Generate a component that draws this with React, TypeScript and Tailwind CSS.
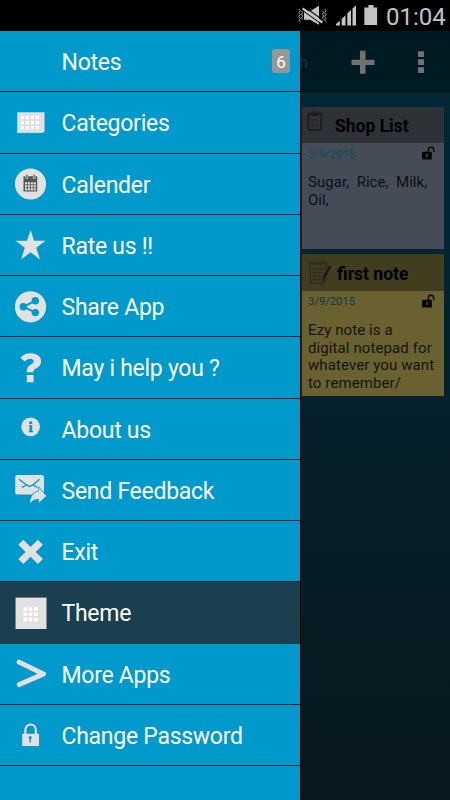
import type { ReactNode } from "react";

const LIGHT = "#e1e1e1";
const BLUE = "#0099cc";

const Svg = ({ children }: { children: ReactNode }) => (
  <svg viewBox="0 0 32 32" className="block h-8 w-8">
    {children}
  </svg>
);

function dots(xs: number[], ys: number[], size: number) {
  return ys.flatMap((y) =>
    xs.map((x) => (
      <rect key={`${x}-${y}`} x={x} y={y} width={size} height={size} fill="#fff" />
    ))
  );
}

const icons = {
  categories: (
    <Svg>
      <path d="M2.3 5.3h27.2v19l-1.7 1.7H2.3z" fill={LIGHT} />
      <path d="M2.8 5.3v20.3h25" fill="none" stroke="#bfd3dc" />
      {dots([5.8, 10.9, 16, 21], [9, 14, 19.1], 3)}
    </Svg>
  ),
  calendar: (
    <Svg>
      <circle cx="15.5" cy="16" r="15.6" fill={LIGHT} />
      <path d="M8.5 8.2h2v2.2h2.6V8.2h4.8v2.2h2.6V8.2h1.7v15.4H8.5z" fill="#555" />
      <path d="M11.2 6.8h1.3v3h-1.3zM18.5 6.8h1.3v3h-1.3z" fill="#555" />
      {[10, 12.9, 15.8, 18.7].map((x) =>
        [14.2, 17.2, 20.2].map((y) => (
          <rect key={`${x}-${y}`} x={x} y={y} width="2.1" height="2.2" fill={LIGHT} />
        ))
      )}
    </Svg>
  ),
  star: (
    <Svg>
      <path
        d="M15.6 1l3.5 10.8h11.5l-9.3 6.9 3.7 11.7-9.4-7.1-9.5 7.1 3.7-11.7-9.3-6.9H12z"
        fill={LIGHT}
      />
    </Svg>
  ),
  share: (
    <Svg>
      <circle cx="15.5" cy="15.8" r="15.6" fill={LIGHT} />
      <path d="M20.2 9.8l-12 6 12 5.6" fill="none" stroke={BLUE} strokeWidth="2" />
      <circle cx="20.3" cy="9.7" r="3.7" fill={BLUE} />
      <circle cx="8.3" cy="15.8" r="3.7" fill={BLUE} />
      <circle cx="20.3" cy="21.6" r="3.7" fill={BLUE} />
    </Svg>
  ),
  help: (
    <Svg>
      <path
        d="M5.4 5.9C7.6 2.8 11 1.2 15.4 1.2c6.2 0 10.7 3.1 10.7 8 0 4.3-2.9 6-5.2 7.4-1.9 1.1-2.6 1.7-2.6 3.7h-6.6c0-4.3 1.5-6.1 4.3-7.8 1.7-1.1 2.7-1.7 2.7-3.2 0-1.6-1.4-2.5-3.5-2.5-2.1 0-3.7.8-5.3 2.8z"
        fill={LIGHT}
      />
      <path d="M11.8 23h6.8v7.3h-6.8z" fill={LIGHT} />
    </Svg>
  ),
  info: (
    <Svg>
      <circle cx="15.6" cy="13.8" r="9.4" fill={LIGHT} />
      <path d="M14.2 8.6h3v2.5h-3zM13.8 12.3h3.4v5.8h.9v1.2h-4.3v-1.200h.7v-4.600h-.7z" fill={BLUE} />
    </Svg>
  ),
  feedback: (
    <Svg>
      <rect x="0.2" y=".9" width="28.8" height="19.6" rx="2.5" fill={LIGHT} />
      <path
        d="M4 5.300l7.600 5.600 3.100 1.600 3.100-1.600L24.500 5.300M6.800 13.500l4.800-2.600M22.400 13.500l-4.600-2.600"
        fill="none"
        stroke={BLUE}
        strokeWidth="1.3"
      />
      <path
        d="M15 29.400c.2-6.600 3.500-11.600 8.900-12v-3.600l7.300 8.300-7.300 6.600v-3.600c-4-.2-6.700 1.100-8.900 4.300z"
        fill={LIGHT}
        stroke={BLUE}
        strokeWidth="1.4"
        paintOrder="stroke"
      />
    </Svg>
  ),
  exit: (
    <Svg>
      <path
        d="M8.3 3.8l7.300 7.300 7.300-7.300 5 5-7.200 7.100 7.200 7.100-5 5-7.300-7.200L8.300 28l-5-5 7.300-7.100-7.300-7.100z"
        fill={LIGHT}
      />
    </Svg>
  ),
  theme: (
    <Svg>
      <rect width="31.5" height="32" fill={LIGHT} />
      <path d="M.1 32V.2H31.5" fill="none" stroke="#142339" strokeWidth=".8" />
      {dots([8.5, 13.7, 19], [10.2, 15.4, 20.7], 3.6)}
    </Svg>
  ),
  more: (
    <Svg>
      <path
        d="M4.1 4.1L28.5 16 4.3 26.600"
        fill="none"
        stroke={LIGHT}
        strokeWidth="4.9"
        strokeLinecap="round"
        strokeLinejoin="round"
      />
    </Svg>
  ),
  lock: (
    <Svg>
      <path d="M10.4 15.5v-4.800a5.200 5.200 0 0 1 10.400 0v4.800" fill="none" stroke={LIGHT} strokeWidth="2.2" />
      <rect x="7.2" y="14.7" width="16.8" height="12.3" rx=".5" fill={LIGHT} />
      <path d="M14 19.800a1.600 1.600 0 1 1 2.400 0l-.5.7v2.900h-1.400v-2.900z" fill={BLUE} />
    </Svg>
  ),
};

type Item = { label: string; icon?: ReactNode; count?: number; active?: boolean };

const items: Item[] = [
  { label: "Notes", count: 6 },
  { label: "Categories", icon: icons.categories },
  { label: "Calender", icon: icons.calendar },
  { label: "Rate us !!", icon: icons.star },
  { label: "Share App", icon: icons.share },
  { label: "May i help you ?", icon: icons.help },
  { label: "About us", icon: icons.info },
  { label: "Send Feedback", icon: icons.feedback },
  { label: "Exit", icon: icons.exit },
  { label: "Theme", icon: icons.theme, active: true },
  { label: "More Apps", icon: icons.more },
  { label: "Change Password", icon: icons.lock },
];

function StatusBar() {
  return (
    <header className="flex h-[31px] shrink-0 items-center bg-black pl-[297px] text-[#c4c4c4]">
      <svg viewBox="0 0 84 26" className="mt-px h-[26px] w-[84px] shrink-0" fill="#c4c4c4">
        <path
          d="M1.8 6l1.5 1.8-1.5 1.9 1.5 1.9-1.5 1.9 1.5 1.9-1.5 1.8 1.5 1.6M4.6 8l1 1.5-1 1.8 1 1.7-1 1.8 1 1.7M27.5 6L29 7.8l-1.5 1.9 1.5 1.9-1.5 1.9 1.5 1.9-1.5 1.8 1.5 1.6M25.5 8l1 1.5-1 1.8 1 1.7-1 1.8 1 1.7"
          fill="none"
          stroke="#a8a8a8"
          strokeWidth="1"
        />
        <path d="M7 8.2h6l9-5.400v19l-9-5H7z" />
        <path d="M5 6.900l19.300 14M7.500 3.800L26.500 17.600" stroke="#000" strokeWidth="1.1" />
        <path d="M5.600 5.300l19.800 14.200" stroke="#c4c4c4" strokeWidth="2.2" />
        <path d="M39 22.500V21l3.800-3.300v4.800zM44.700 22.500v-6.500l3.800-3.700v10.200zM50.300 22.500V10.500l3.700-3.700v15.700zM55.500 22.500V5.500L59 2.300v20.200z" />
        <path d="M71.500 2h5v2.600h3.600V22H67.300V4.600h4.200z" />
      </svg>
      <span className="ml-[5px] mt-[2px] text-[24px] leading-none">01:04</span>
    </header>
  );
}

function MenuRow({ item }: { item: Item }) {
  return (
    <li
      className={`flex h-[61.25px] items-center border-b pl-[15px] pr-[10px] ${
        item.active ? "border-[#17404f] bg-[#1a404f]" : "border-[#06202c]"
      }`}
    >
      <span className="mt-[1.2px] w-[46.5px] shrink-0">{item.icon}</span>
      <span className="mt-[4px] flex-1 whitespace-nowrap text-[23px] leading-7 tracking-[-0.27px]">
        {item.label}
      </span>
      {item.count !== undefined && (
        <span className="flex h-6 w-[18px] items-center justify-center rounded-[3px] bg-[#979797] pt-[2px] text-[17px] leading-none">
          {item.count}
        </span>
      )}
    </li>
  );
}

const OpenLock = () => (
  <svg viewBox="0 0 13 14" className="h-[14px] w-[13px]">
    <path d="M6.300 6V3.900a2.700 2.700 0 0 1 5.400 0v2.400" fill="none" stroke="#060606" strokeWidth="1.4" />
    <rect y="5.7" width="9.8" height="7.8" rx=".6" fill="#060606" />
    <path d="M4.300 8h1.400v3H4.300z" fill="#55585c" />
  </svg>
);

const Clipboard = () => (
  <svg viewBox="0 0 16 21" className="h-[21px] w-4" fill="none" stroke="#1b1f22">
    <rect x="1.2" y="2.5" width="13" height="16.5" rx="1.5" strokeWidth="1.9" />
    <path d="M4.300 3.500h6.800" strokeWidth="3" />
    <path d="M7.700 0v3" strokeWidth="2" />
    <path d="M4 9h2.500M7.500 9H11M4 13.500h2.500M7.500 13.500H11" strokeWidth=".7" />
  </svg>
);

const Notepad = () => (
  <svg viewBox="0 0 26 25" className="h-[25px] w-[26px]" fill="none" stroke="#2b2d20">
    <path d="M2 3.500h16.500l-.5 15.500-3 4.500H2.500z" strokeWidth="1.4" />
    <path d="M2.500 1v4M5 1v4M7.500 1v4M10 1v4M12.500 1v4M15 1v4M17.500 1v4" strokeWidth="1.3" />
    <path d="M4.500 9H16M4.500 12.500H15M4.500 16H14M4.500 19.500h8" strokeWidth="1.3" />
    <path d="M22.300 6L15.500 18" stroke="#10191b" strokeWidth="2.5" />
    <path d="M15.500 18l-1.300 3" stroke="#10191b" strokeWidth="1.2" />
  </svg>
);

function ShopCard() {
  return (
    <article className="h-[142px] w-[142px] bg-[#464c55]">
      <div className="flex h-9 items-center bg-[#2e3136] pl-[5px]">
        <span className="-mt-[7px]">
          <Clipboard />
        </span>
        <h2 className="ml-[12px] mt-[4px] whitespace-nowrap text-[17.5px] font-bold leading-none">Shop List</h2>
      </div>
      <div className="flex items-start justify-between pl-[6px] pr-[9px] pt-[3px]">
        <time className="pt-[2px] text-[11.2px] leading-[14px] text-[#0a4a5e]">3/9/2015</time>
        <OpenLock />
      </div>
      <p className="whitespace-pre pl-[6px] pt-[12px] text-[15px] leading-[17.5px] tracking-[0.04px] text-[#07111a]">
        {"Sugar,  Rice,  Milk,\nOil,"}
      </p>
    </article>
  );
}

function FirstNoteCard() {
  return (
    <article className="mt-[5px] h-[142px] w-[142px] bg-[#696130]">
      <div className="flex h-[37px] items-center bg-[#433d1f] pl-[6px]">
        <Notepad />
        <h2 className="ml-[3px] mt-[4px] whitespace-nowrap text-[17.5px] font-bold leading-none">first note</h2>
      </div>
      <div className="flex items-start justify-between pl-[6px] pr-[9px] pt-[3px]">
        <time className="pt-px text-[11.2px] leading-[14px] text-[#0a3845]">3/9/2015</time>
        <OpenLock />
      </div>
      <p className="whitespace-pre pl-[6px] pt-[13px] text-[15px] leading-[17.5px] tracking-[0.1px] text-[#10160f]">
        {"Ezy note is a\ndigital notepad for\nwhatever you want\nto remember/"}
      </p>
    </article>
  );
}

export default function App() {
  return (
    <div className="flex h-[800px] w-[450px] flex-col overflow-hidden bg-black font-[Roboto,sans-serif]">
      <StatusBar />
      <div className="flex min-h-0 flex-1">
        <nav className="w-[300px] shrink-0 bg-[#0099cc] text-white">
          <ul>
            {items.map((item) => (
              <MenuRow key={item.label} item={item} />
            ))}
          </ul>
        </nav>
        {/* dimmed notes screen behind the open drawer */}
        <main className="flex w-[150px] flex-col border-l border-black bg-linear-to-b from-[#002938] to-[#08181e]">
          <div className="flex h-[62px] shrink-0 items-center bg-[#001a22]">
            <span className="-ml-[2px] mt-[2px] w-[52px] text-[16px] text-[#302a2b]">h</span>
            <svg viewBox="0 0 24 24" className="h-6 w-6">
              <path d="M9 .8h5.500v9h9v5.300h-9v8.700H9v-8.700H.5V9.800H9z" fill="#717171" />
            </svg>
            <svg viewBox="0 0 6 24" className="ml-[43px] h-6 w-[6px]" fill="#717171">
              <path d="M0 1.300h6v5.700H0zM0 9.300h6v5.700H0zM0 17.300h6v5.700H0z" />
            </svg>
          </div>
          <div className="pl-px pt-[14px]">
            <ShopCard />
            <FirstNoteCard />
          </div>
        </main>
      </div>
    </div>
  );
}
